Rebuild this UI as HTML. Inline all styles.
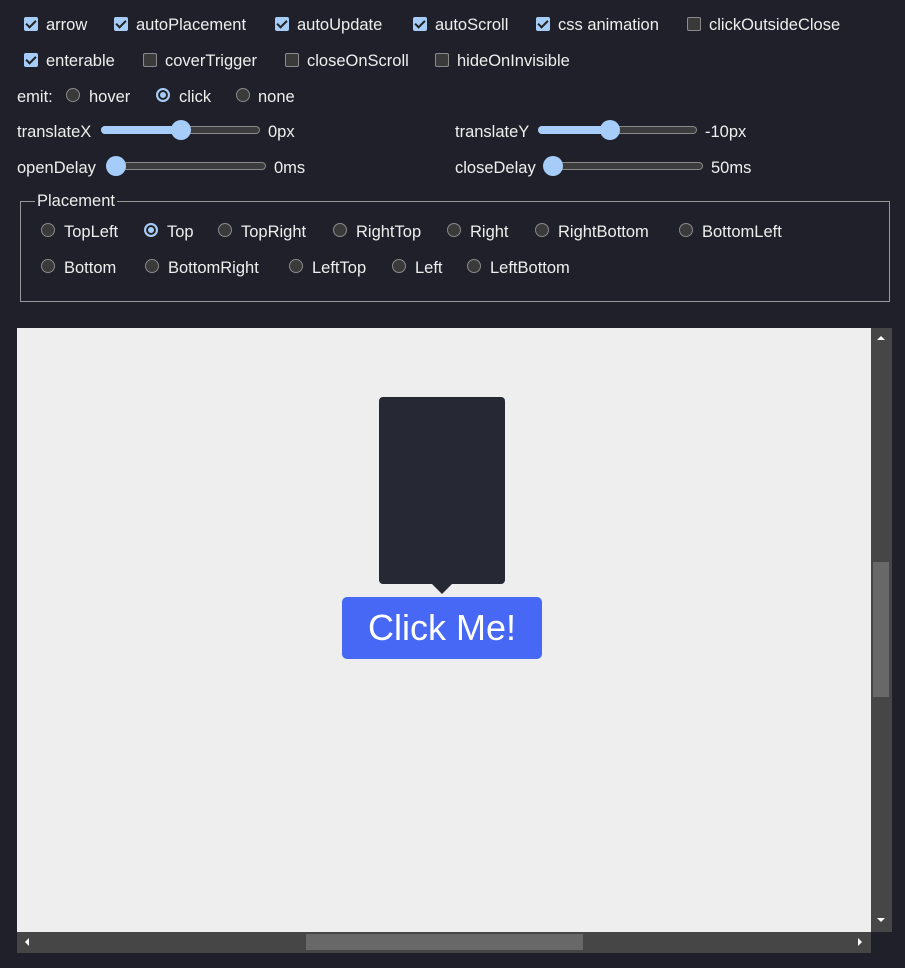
<!DOCTYPE html>
<html><head><style>
*{margin:0;padding:0;box-sizing:border-box}
body{width:905px;height:968px;background:#20202a;color:#eee;font-family:"Liberation Sans",sans-serif;font-size:16.5px;position:relative;overflow:hidden}
.a{position:absolute;white-space:nowrap;line-height:20px;margin-top:1px}
.cb{position:absolute;width:14px;height:14px;border-radius:2px;background:#a6cdf9}
.cb::after{content:"";position:absolute;left:4px;top:1px;width:4px;height:8px;border:solid #222;border-width:0 2px 2px 0;transform:rotate(45deg)}
.cu{position:absolute;width:14px;height:14px;border-radius:2px;background:#3a3a3a;border:1px solid #8a8a8a}
.r{position:absolute;width:14px;height:14px;border-radius:50%;background:#3a3a3a;border:1px solid #8a8a8a}
.rs{position:absolute;width:14px;height:14px;border-radius:50%;background:#a6cdf9;border:2px solid #a6cdf9;box-shadow:inset 0 0 0 2px #222}
.tr{position:absolute;height:8px;border-radius:4px;background:#3c3c3c;border:1px solid #888}
.fill{position:absolute;height:8px;border-radius:4px;background:#a6cdf9}
.th{position:absolute;width:20px;height:20px;border-radius:50%;background:#a6cdf9}
</style></head><body>
<div class="cb" style="left:24px;top:17px"></div><div class="a" style="left:46px;top:14px">arrow</div>
<div class="cb" style="left:114px;top:17px"></div><div class="a" style="left:136px;top:14px">autoPlacement</div>
<div class="cb" style="left:275px;top:17px"></div><div class="a" style="left:297px;top:14px">autoUpdate</div>
<div class="cb" style="left:413px;top:17px"></div><div class="a" style="left:435px;top:14px">autoScroll</div>
<div class="cb" style="left:536px;top:17px"></div><div class="a" style="left:558px;top:14px">css animation</div>
<div class="cu" style="left:687px;top:17px"></div><div class="a" style="left:709px;top:14px">clickOutsideClose</div>

<div class="cb" style="left:24px;top:53px"></div><div class="a" style="left:46px;top:50px">enterable</div>
<div class="cu" style="left:143px;top:53px"></div><div class="a" style="left:165px;top:50px">coverTrigger</div>
<div class="cu" style="left:285px;top:53px"></div><div class="a" style="left:307px;top:50px">closeOnScroll</div>
<div class="cu" style="left:435px;top:53px"></div><div class="a" style="left:457px;top:50px">hideOnInvisible</div>

<div class="a" style="left:17px;top:86px">emit:</div>
<div class="r" style="left:66px;top:88px"></div><div class="a" style="left:89px;top:86px">hover</div>
<div class="rs" style="left:156px;top:88px"></div><div class="a" style="left:179px;top:86px">click</div>
<div class="r" style="left:236px;top:88px"></div><div class="a" style="left:258px;top:86px">none</div>

<div class="a" style="left:17px;top:121px">translateX</div>
<div class="tr" style="left:101px;top:126px;width:159px"></div><div class="fill" style="left:101px;top:126px;width:80px"></div><div class="th" style="left:171px;top:120px"></div>
<div class="a" style="left:268px;top:121px">0px</div>
<div class="a" style="left:455px;top:121px">translateY</div>
<div class="tr" style="left:538px;top:126px;width:159px"></div><div class="fill" style="left:538px;top:126px;width:72px"></div><div class="th" style="left:600px;top:120px"></div>
<div class="a" style="left:705px;top:121px">-10px</div>

<div class="a" style="left:17px;top:157px">openDelay</div>
<div class="tr" style="left:107px;top:162px;width:159px"></div><div class="th" style="left:106px;top:156px"></div>
<div class="a" style="left:274px;top:157px">0ms</div>
<div class="a" style="left:455px;top:157px">closeDelay</div>
<div class="tr" style="left:544px;top:162px;width:159px"></div><div class="th" style="left:543px;top:156px"></div>
<div class="a" style="left:711px;top:157px">50ms</div>

<div style="position:absolute;left:20px;top:201px;width:870px;height:101px;border:1px solid #999"></div>
<div class="a" style="left:35px;top:190px;background:#20202a;padding:0 2px">Placement</div>
<div class="r" style="left:41px;top:223px"></div><div class="a" style="left:64px;top:221px">TopLeft</div>
<div class="rs" style="left:144px;top:223px"></div><div class="a" style="left:167px;top:221px">Top</div>
<div class="r" style="left:218px;top:223px"></div><div class="a" style="left:241px;top:221px">TopRight</div>
<div class="r" style="left:333px;top:223px"></div><div class="a" style="left:356px;top:221px">RightTop</div>
<div class="r" style="left:447px;top:223px"></div><div class="a" style="left:470px;top:221px">Right</div>
<div class="r" style="left:535px;top:223px"></div><div class="a" style="left:558px;top:221px">RightBottom</div>
<div class="r" style="left:679px;top:223px"></div><div class="a" style="left:702px;top:221px">BottomLeft</div>
<div class="r" style="left:41px;top:259px"></div><div class="a" style="left:64px;top:257px">Bottom</div>
<div class="r" style="left:145px;top:259px"></div><div class="a" style="left:168px;top:257px">BottomRight</div>
<div class="r" style="left:289px;top:259px"></div><div class="a" style="left:312px;top:257px">LeftTop</div>
<div class="r" style="left:392px;top:259px"></div><div class="a" style="left:415px;top:257px">Left</div>
<div class="r" style="left:467px;top:259px"></div><div class="a" style="left:490px;top:257px">LeftBottom</div>

<div style="position:absolute;left:17px;top:328px;width:854px;height:604px;background:#eeeeee"></div>
<div style="position:absolute;left:871px;top:328px;width:21px;height:604px;background:#464646"></div>
<div style="position:absolute;left:873px;top:562px;width:16px;height:135px;background:#686868"></div>
<div style="position:absolute;left:17px;top:932px;width:854px;height:21px;background:#464646"></div>
<div style="position:absolute;left:306px;top:934px;width:277px;height:16px;background:#686868"></div>
<div style="position:absolute;left:877px;top:336px;border:4px solid transparent;border-bottom:4px solid #fff;border-top:0"></div>
<div style="position:absolute;left:877px;top:918px;border:4px solid transparent;border-top:4px solid #fff;border-bottom:0"></div>
<div style="position:absolute;left:25px;top:938px;border:4px solid transparent;border-right:4px solid #fff;border-left:0"></div>
<div style="position:absolute;left:858px;top:938px;border:4px solid transparent;border-left:4px solid #fff;border-right:0"></div>

<div style="position:absolute;left:379px;top:397px;width:126px;height:187px;background:#262833;border-radius:4px"></div>
<div style="position:absolute;left:432px;top:584px;border:10px solid transparent;border-top:10px solid #262833;border-bottom:0"></div>
<div style="position:absolute;left:342px;top:597px;width:200px;height:62px;background:#4668f5;border-radius:5px;color:#fff;font-size:36px;line-height:62px;text-align:center">Click Me!</div>
</body></html>
